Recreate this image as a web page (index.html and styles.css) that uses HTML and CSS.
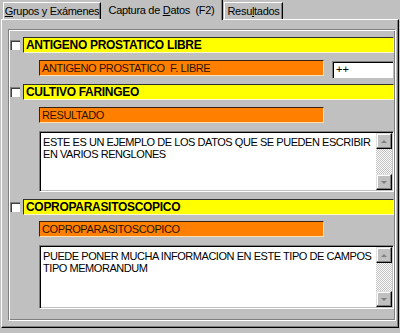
FILE: index.html
```html
<!DOCTYPE html>
<html>
<head>
    <title>Captura de Datos</title>
    <meta charset="utf-8">
    <link rel="stylesheet" href="styles.css">
</head>
<body>
    <div class="window">
        <div class="tabs">
            <div class="tab tab-grupos"><u>G</u>rupos y Exámenes</div>
            <div class="tab tab-captura active">Captura de <u>D</u>atos&nbsp; (F2)</div>
            <div class="tab tab-resultados">Resu<u>l</u>tados</div>
        </div>

        <div class="panel">
            <div class="frame">

                <section class="test test-first">
                    <div class="test-head">
                        <span class="check"></span>
                        <div class="title">ANTIGENO PROSTATICO LIBRE</div>
                    </div>
                    <div class="field-row">
                        <div class="label">ANTIGENO PROSTATICO&nbsp; F. LIBRE</div>
                        <div class="value">++</div>
                    </div>
                </section>

                <section class="test test-middle">
                    <div class="test-head">
                        <span class="check"></span>
                        <div class="title">CULTIVO FARINGEO</div>
                    </div>
                    <div class="field-row">
                        <div class="label">RESULTADO</div>
                    </div>
                    <div class="memo memo-short">
                        <div class="memo-text">ESTE ES UN EJEMPLO DE LOS DATOS QUE SE PUEDEN ESCRIBIR<br>EN VARIOS RENGLONES</div>
                        <div class="scrollbar">
                            <div class="sb-btn sb-up"></div>
                            <div class="sb-track"></div>
                            <div class="sb-btn sb-down"></div>
                        </div>
                    </div>
                </section>

                <section class="test test-last">
                    <div class="test-head">
                        <span class="check"></span>
                        <div class="title">COPROPARASITOSCOPICO</div>
                    </div>
                    <div class="field-row">
                        <div class="label">COPROPARASITOSCOPICO</div>
                    </div>
                    <div class="memo memo-tall">
                        <div class="memo-text">PUEDE PONER MUCHA INFORMACION EN ESTE TIPO DE CAMPOS<br>TIPO MEMORANDUM</div>
                        <div class="scrollbar">
                            <div class="sb-btn sb-up"></div>
                            <div class="sb-track"></div>
                            <div class="sb-btn sb-down"></div>
                        </div>
                    </div>
                </section>

            </div>
        </div>
    </div>
</body>
</html>
```

FILE: styles.css
```css
body {
    margin: 0;
    background-color: #c0c0c0;
    font-family: 'Liberation Sans', Arial, sans-serif;
    color: #000;
}

.window {
    width: 400px;
    height: 333px;
    overflow: hidden;
}

/* tab strip */
.tabs {
    display: flex;
    align-items: flex-end;
    height: 19px;
    padding-left: 3px;
    position: relative;
    z-index: 1;
}

.tab {
    box-sizing: border-box;
    height: 17px;
    padding-top: 2px;
    font-size: 11px;
    letter-spacing: -0.3px;
    text-align: center;
    white-space: nowrap;
    overflow: hidden;
    border-top: 1px solid #fff;
    border-left: 1px solid #fff;
    border-right: 1px solid #000;
    box-shadow: inset -1px 0 #808080;
}

.tab-grupos {
    width: 98px;
}

.tab-captura {
    width: 122px;
}

.tab-resultados {
    width: 59px;
    margin-left: 1px;
}

.tab.active {
    height: 20px;
    margin-bottom: -1px;
    padding-top: 4px;
    background-color: #c0c0c0;
    border-left: none;
    border-top: none;
}

/* tab page */
.panel {
    margin: 0 1px;
    padding: 9px 2px 6px 6px;
    border-top: 1px solid #fff;
    border-left: 1px solid #fff;
    border-right: 1px solid #000;
    border-bottom: 1px solid #000;
    box-shadow: inset -1px -1px #808080;
}

.frame {
    padding: 7px 1px 11px 1px;
    border-top: 1px solid #808080;
    border-left: 1px solid #808080;
    border-right: 1px solid #fff;
    border-bottom: 1px solid #fff;
    box-shadow: inset 1px 1px #fff, inset -1px -1px #808080;
}

.test-first {
    margin-bottom: 6px;
}

.test-middle {
    margin-bottom: 7px;
}

.test-head {
    display: flex;
    align-items: center;
    gap: 3px;
}

.check {
    box-sizing: border-box;
    width: 10px;
    height: 10px;
    background-color: #fff;
    border-top: 1px solid #808080;
    border-left: 1px solid #808080;
    box-shadow: inset 1px 1px #404040;
}

.title {
    flex: 1;
    box-sizing: border-box;
    height: 16px;
    padding: 1px 0 0 2px;
    background-color: #ffff00;
    border-top: 1px solid #303030;
    border-left: 1px solid #303030;
    border-right: 1px solid #fff8d0;
    border-bottom: 1px solid #fff8d0;
    font-weight: bold;
    font-size: 12px;
    letter-spacing: -0.3px;
    line-height: 13px;
    white-space: nowrap;
}

.field-row {
    display: flex;
    align-items: flex-start;
    gap: 8px;
    margin-top: 7px;
    padding-left: 29px;
}

.test-last .field-row {
    margin-top: 6px;
}

.label {
    box-sizing: border-box;
    width: 285px;
    height: 16px;
    padding: 1px 0 0 2px;
    background-color: #ff8000;
    border-top: 1px solid #3a2010;
    border-left: 1px solid #3a2010;
    border-right: 1px solid #ffe0b0;
    border-bottom: 1px solid #ffe0b0;
    color: #2a1200;
    font-size: 11px;
    letter-spacing: -0.4px;
    line-height: 13px;
    white-space: pre;
}

.value {
    box-sizing: border-box;
    width: 61px;
    height: 17px;
    margin-top: 1px;
    padding: 1px 0 0 3px;
    background-color: #fff;
    border-top: 1px solid #808080;
    border-left: 1px solid #808080;
    box-shadow: inset 1px 1px #000;
    font-size: 11px;
    line-height: 13px;
}

/* memo fields */
.memo {
    display: flex;
    box-sizing: border-box;
    margin: 8px 0 0 29px;
    padding: 1px;
    background-color: #fff;
    border-top: 1px solid #808080;
    border-left: 1px solid #808080;
    border-right: 1px solid #fff;
    border-bottom: 1px solid #fff;
    box-shadow: inset 1px 1px #000, inset -1px -1px #c0c0c0;
}

.memo-short {
    height: 61px;
}

.memo-tall {
    height: 64px;
}

.memo-text {
    flex: 1;
    padding: 3px 0 0 2px;
    font-size: 11px;
    letter-spacing: -0.45px;
    line-height: 12px;
    white-space: nowrap;
    overflow: hidden;
}

.scrollbar {
    width: 16px;
    display: flex;
    flex-direction: column;
}

.sb-track {
    flex: 1;
    background: repeating-conic-gradient(#c0c0c0 0 25%, #fff 0 50%) 0 0 / 2px 2px;
}

.sb-btn {
    box-sizing: border-box;
    height: 16px;
    background-color: #c0c0c0;
    border-top: 1px solid #e0e0e0;
    border-left: 1px solid #e0e0e0;
    border-right: 1px solid #000;
    border-bottom: 1px solid #000;
    box-shadow: inset -1px -1px #808080, inset 1px 1px #fff;
    display: flex;
    align-items: center;
    justify-content: center;
}

.sb-btn::after {
    content: "";
    width: 0;
    height: 0;
    border-left: 3px solid transparent;
    border-right: 3px solid transparent;
}

.sb-up::after {
    border-bottom: 3px solid #808080;
}

.sb-down::after {
    border-top: 3px solid #808080;
}
```
